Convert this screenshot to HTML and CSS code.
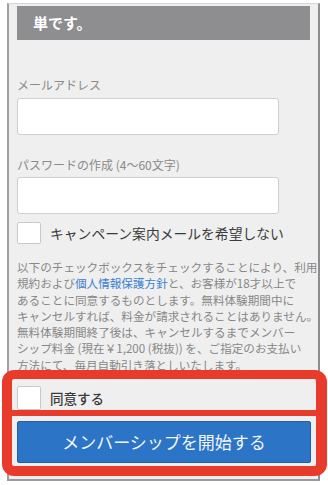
FILE: index.html
```html
<!DOCTYPE html>
<html lang="ja">
<head>
<meta charset="utf-8">
<link rel="stylesheet" href="styles.css">
</head>
<body>
<div class="frame">
  <div class="banner">単です。</div>
  <div class="label label-email">メールアドレス</div>
  <div class="input"></div>
  <div class="label label-pass">パスワードの作成 (4〜60文字)</div>
  <div class="input"></div>
  <div class="check-row">
    <span class="box"></span>
    <span class="check-text">キャンペーン案内メールを希望しない</span>
  </div>
  <p class="terms">
    <span class="line">以下のチェックボックスをチェックすることにより、利用</span>
    <span class="line">規約および<span class="link">個人情報保護方針</span>と、お客様が18才以上で</span>
    <span class="line">あることに同意するものとします。無料体験期間中に</span>
    <span class="line">キャンセルすれば、料金が請求されることはありません。</span>
    <span class="line">無料体験期間終了後は、キャンセルするまでメンバー</span>
    <span class="line">シップ料金 (現在￥1,200 (税抜)) を、ご指定のお支払い</span>
    <span class="line">方法にて、毎月自動引き落としいたします。</span>
  </p>
  <div class="highlight">
    <div class="agree-row">
      <span class="box agree-box"></span>
      <span class="agree-text">同意する</span>
    </div>
    <div class="button-area">
      <div class="start-btn">メンバーシップを開始する</div>
    </div>
  </div>
</div>
</body>
</html>
```
FILE: styles.css
```css
html, body {
  margin: 0;
  padding: 0;
  background: #ffffff;
}
body {
  width: 328px;
  height: 485px;
  overflow: hidden;
  font-family: "Noto Sans CJK JP", "Noto Sans", sans-serif;
}
.frame {
  margin: 3px 8px 0 7px;
  border-left: 2px solid #a0a0a0;
  border-right: 2px solid #8e8e8e;
  border-top: 1px solid #d6d6d6;
  border-bottom: 2px solid #9a9a9a;
  background: #efefef;
  padding: 2px 8px 3px 8px;
}
.banner {
  height: 34px;
  line-height: 34px;
  background: #8e8e91;
  color: #ffffff;
  font-weight: bold;
  font-size: 15px;
  padding-left: 16px;
}
.label {
  font-size: 12px;
  line-height: 16px;
  color: #8a8a8a;
}
.label-email {
  margin-top: 37px;
  margin-bottom: 5px;
}
.label-pass {
  margin-top: 22px;
  margin-bottom: 4px;
}
.input {
  width: 260px;
  height: 35px;
  background: #ffffff;
  border: 1px solid #cfcfcf;
  border-radius: 3px;
}
.check-row {
  margin-top: 8px;
  display: flex;
  align-items: center;
  height: 22px;
}
.box {
  display: block;
  box-sizing: border-box;
  width: 24px;
  height: 22px;
  background: #ffffff;
  border: 1px solid #c9c9c9;
  border-radius: 2px;
  flex: none;
}
.check-text {
  margin-left: 9px;
  font-size: 13.8px;
  color: #3a3a3a;
  white-space: nowrap;
}
.terms {
  margin: 15px 0 0 0;
  font-size: 11.6px;
  line-height: 16.3px;
  color: #878787;
}
.line {
  display: block;
  white-space: nowrap;
}
.link {
  color: #3a7fcf;
}
.highlight {
  position: relative;
  margin: -3px -17px 0 -15px;
  border: solid #e93b2c;
  border-width: 9px 11px 10px 10px;
  border-radius: 12px;
  background: #efefef;
}
.agree-row {
  box-sizing: border-box;
  padding: 0 0 0 5px;
  display: flex;
  align-items: flex-start;
  overflow: hidden;
  border-bottom: 6px solid #e93b2c;
  height: 37px;
}
.agree-box {
  margin-top: 7px;
  height: 24px;
}
.agree-text {
  margin-left: 9px;
  margin-top: 10px;
  font-size: 13.5px;
  line-height: 18px;
  color: #3a3a3a;
  font-weight: 500;
}
.button-area {
  padding: 5px 5px 3px 5px;
}
.start-btn {
  height: 42px;
  box-sizing: border-box;
  background: #2b74c6;
  border: 1px solid #235fa6;
  border-radius: 2px;
  color: #f2f6fb;
  font-size: 17px;
  line-height: 40px;
  text-align: center;
}
```
